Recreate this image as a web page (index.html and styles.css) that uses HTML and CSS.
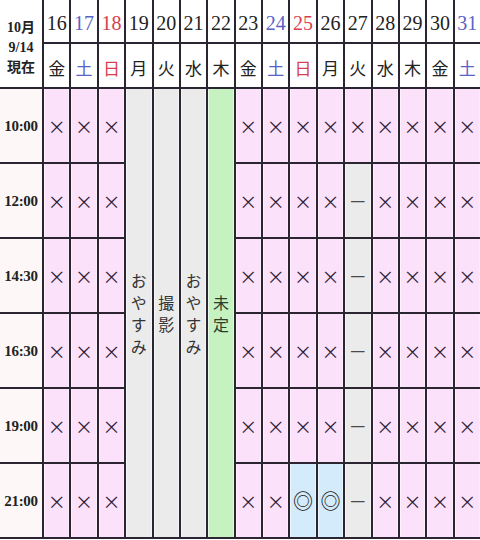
FILE: index.html
```html
<!DOCTYPE html>
<html lang="ja">
<head>
<meta charset="utf-8">
<link rel="stylesheet" href="styles.css">
</head>
<body>
<div class="sched">
  <div class="corner">10月<br>9/14<br>現在</div>
  <div class="d">16</div><div class="d sat">17</div><div class="d sun">18</div><div class="d">19</div><div class="d">20</div><div class="d">21</div><div class="d">22</div><div class="d">23</div><div class="d sat">24</div><div class="d sun">25</div><div class="d">26</div><div class="d">27</div><div class="d">28</div><div class="d">29</div><div class="d">30</div><div class="d sat">31</div>
  <div class="w">金</div><div class="w sat">土</div><div class="w sun">日</div><div class="w">月</div><div class="w">火</div><div class="w">水</div><div class="w">木</div><div class="w">金</div><div class="w sat">土</div><div class="w sun">日</div><div class="w">月</div><div class="w">火</div><div class="w">水</div><div class="w">木</div><div class="w">金</div><div class="w sat">土</div>

  <div class="t">10:00</div>
  <div class="c x">×</div><div class="c x">×</div><div class="c x">×</div>
  <div class="m grey"><span>おやすみ</span></div>
  <div class="m grey"><span>撮影</span></div>
  <div class="m grey"><span>おやすみ</span></div>
  <div class="m green"><span>未定</span></div>
  <div class="c x">×</div><div class="c x">×</div><div class="c x">×</div><div class="c x">×</div><div class="c x">×</div><div class="c x">×</div><div class="c x">×</div><div class="c x">×</div><div class="c x">×</div>

  <div class="t">12:00</div>
  <div class="c x">×</div><div class="c x">×</div><div class="c x">×</div>
  <div class="c x">×</div><div class="c x">×</div><div class="c x">×</div><div class="c x">×</div><div class="c g">—</div><div class="c x">×</div><div class="c x">×</div><div class="c x">×</div><div class="c x">×</div>

  <div class="t">14:30</div>
  <div class="c x">×</div><div class="c x">×</div><div class="c x">×</div>
  <div class="c x">×</div><div class="c x">×</div><div class="c x">×</div><div class="c x">×</div><div class="c g">—</div><div class="c x">×</div><div class="c x">×</div><div class="c x">×</div><div class="c x">×</div>

  <div class="t">16:30</div>
  <div class="c x">×</div><div class="c x">×</div><div class="c x">×</div>
  <div class="c x">×</div><div class="c x">×</div><div class="c x">×</div><div class="c x">×</div><div class="c g">—</div><div class="c x">×</div><div class="c x">×</div><div class="c x">×</div><div class="c x">×</div>

  <div class="t">19:00</div>
  <div class="c x">×</div><div class="c x">×</div><div class="c x">×</div>
  <div class="c x">×</div><div class="c x">×</div><div class="c x">×</div><div class="c x">×</div><div class="c g">—</div><div class="c x">×</div><div class="c x">×</div><div class="c x">×</div><div class="c x">×</div>

  <div class="t">21:00</div>
  <div class="c x">×</div><div class="c x">×</div><div class="c x">×</div>
  <div class="c x">×</div><div class="c x">×</div><div class="c o">◎</div><div class="c o">◎</div><div class="c g">—</div><div class="c x">×</div><div class="c x">×</div><div class="c x">×</div><div class="c x">×</div>
</div>
</body>
</html>
```
FILE: styles.css
```css
html, body {
  margin: 0;
  padding: 0;
  background: #ffffff;
  overflow: hidden;
}
.sched {
  display: grid;
  grid-template-columns: 42px repeat(16, 1fr);
  grid-template-rows: 42px 43px repeat(6, 73px);
  gap: 2px;
  width: 480px;
  padding: 0 2px 2px 0;
  background: #2a2530;
  font-family: "Liberation Serif", "Noto Sans CJK JP", serif;
  color: #222;
}
.sched > div {
  display: flex;
  align-items: center;
  justify-content: center;
}
.corner {
  grid-row: span 2;
  background: #fff;
  flex-direction: column;
  font-weight: bold;
  font-size: 14px;
  line-height: 20px;
  text-align: center;
  padding-top: 8px;
  box-sizing: border-box;
  font-family: "Liberation Serif", "Noto Sans CJK JP", serif;
}
.d {
  background: #fff;
  font-size: 20px;
  padding-top: 4px;
  box-sizing: border-box;
}
.w {
  background: #fff;
  font-family: "Noto Sans CJK JP", sans-serif;
  font-size: 17px;
  padding-top: 4px;
  box-sizing: border-box;
}
.sat { color: #5a62c8; }
.sun { color: #d6404e; }
.t {
  background: #fdf8f7;
  font-weight: bold;
  font-size: 15px;
  letter-spacing: -0.3px;
  padding-top: 2px;
  box-sizing: border-box;
}
.c {
  box-shadow: inset 1px 0 0 rgba(255,255,255,0.55), inset -1px 0 0 rgba(255,255,255,0.45);
}
.x {
  background: #fce1fb;
  color: #2e2236;
  font-family: "Noto Sans CJK JP", sans-serif;
  font-size: 18px;
  font-weight: 400;
}
.g {
  background: #ebebeb;
  color: #4a4a4a;
  font-family: "DejaVu Sans", sans-serif;
  font-size: 15px;
}
.o {
  background: #d3ebfa;
  color: #222;
  font-family: "Noto Sans CJK JP", sans-serif;
  font-size: 20px;
  font-weight: 500;
}
.m {
  grid-row: span 6;
  font-family: "Noto Sans CJK JP", sans-serif;
  font-size: 16px;
  color: #333;
  box-shadow: inset 1px 0 0 rgba(255,255,255,0.6), inset -1px 0 0 rgba(255,255,255,0.5);
}
.m span {
  writing-mode: vertical-rl;
  text-orientation: upright;
  letter-spacing: 6px;
  margin-top: 8px;
}
.grey { background: #ebebeb; }
.green { background: #c6f2c2; color: #2d3d2d; }
```
